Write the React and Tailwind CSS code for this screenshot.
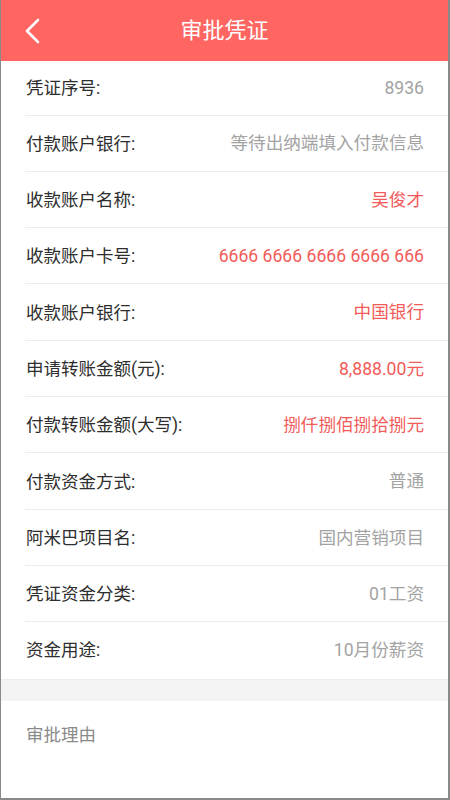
import React from "react";

const rows = [
  ["凭证序号:", "8936", false],
  ["付款账户银行:", "等待出纳端填入付款信息", false],
  ["收款账户名称:", "吴俊才", true],
  ["收款账户卡号:", "6666 6666 6666 6666 666", true],
  ["收款账户银行:", "中国银行", true],
  ["申请转账金额(元):", "8,888.00元", true],
  ["付款转账金额(大写):", "捌仟捌佰捌拾捌元", true],
  ["付款资金方式:", "普通", false],
  ["阿米巴项目名:", "国内营销项目", false],
  ["凭证资金分类:", "01工资", false],
  ["资金用途:", "10月份薪资", false],
];

export default function App() {
  return (
    <div
      className="w-[450px] h-[800px] bg-white flex flex-col border-l border-r-2 border-b-2 border-[#8a8a8a] overflow-hidden"
      style={{ fontFamily: "Roboto, 'Noto Sans CJK SC', sans-serif" }}
    >
      <div className="h-[61px] shrink-0 bg-[#ff6662] flex items-center relative">
        <div className="absolute left-[22px] top-[18px]">
          <svg width="20" height="26" viewBox="0 0 20 26" fill="none">
            <path d="M15 2 L4 13 L15 24" stroke="white" strokeWidth="2.6" strokeLinecap="round" strokeLinejoin="round" />
          </svg>
        </div>
        <div className="flex-1 text-center text-white text-[22px] leading-none">审批凭证</div>
      </div>
      <div className="flex flex-col">
        {rows.map(([label, value, red], i) => (
          <div
            key={i}
            className={`flex items-center justify-between pl-[24px] pr-[24px] ${i === 0 ? "h-[54.5px]" : "h-[56.33px]"}`}
            style={
              i < rows.length - 1
                ? { backgroundImage: "linear-gradient(#ececec,#ececec)", backgroundSize: "calc(100% - 24px) 1px", backgroundPosition: "24px 100%", backgroundRepeat: "no-repeat" }
                : undefined
            }
          >
            <span className="text-[17.5px] text-[#2e2e2e] ml-[1px]">{label}</span>
            <span className={`text-[17.6px] ${red ? "text-[#f25b59]" : "text-[#a3a3a3]"}`}>{value}</span>
          </div>
        ))}
      </div>
      <div className="h-[22px] shrink-0 bg-[#f4f4f4] border-t border-[#ececec]" />
      <div className="flex-1 pl-[25px] pt-[21px]">
        <span className="text-[17.5px] text-[#8a8a8a]">审批理由</span>
      </div>
    </div>
  );
}
